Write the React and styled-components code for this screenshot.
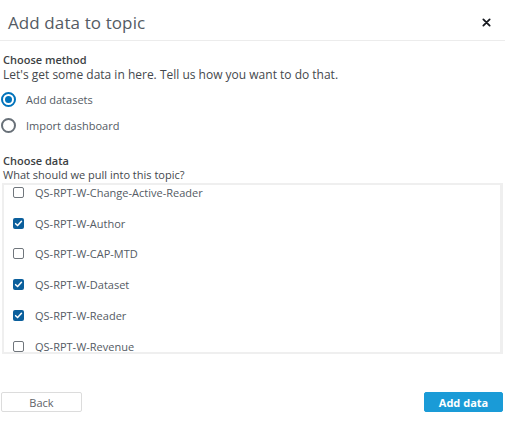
import React, { useEffect, useRef } from "react";
import styled, { createGlobalStyle } from "styled-components";

const Global = createGlobalStyle`
  html, body { margin: 0; padding: 0; background: #fff; }
  body { font-family: "Open Sans", "Noto Sans", Arial, sans-serif; }
  * { box-sizing: border-box; }
`;

const Dialog = styled.div`
  width: 511px;
  height: 431px;
  background: #fff;
  display: flex;
  flex-direction: column;
`;

const Header = styled.div`
  height: 41px;
  display: flex;
  align-items: center;
  justify-content: space-between;
  padding: 4px 13px 0 8px;
  margin-right: 6px;
  border-bottom: 1px solid #ececec;
`;

const Title = styled.h1`
  margin: 0;
  font-size: 17px;
  font-weight: 400;
  color: #545b64;
  letter-spacing: 0.1px;
`;

const Close = styled.button`
  border: 0;
  background: none;
  padding: 0;
  width: 12px;
  height: 12px;
  display: flex;
  align-items: center;
  justify-content: center;
  cursor: pointer;
`;

const Body = styled.div`
  padding: 12px 8px 0 3px;
  display: flex;
  flex-direction: column;
`;

const Section = styled.div`
  display: flex;
  flex-direction: column;
  margin-bottom: ${(p) => p.$gap || 0}px;
`;

const Label = styled.div`
  font-size: 11px;
  line-height: 14px;
  font-weight: 600;
  color: #3c3f43;
`;

const Description = styled.div`
  font-size: ${(p) => p.$size || 11}px;
  line-height: ${(p) => (p.$size ? 16 : 14)}px;
  color: #44484d;
`;

const RadioGroup = styled.div`
  display: flex;
  flex-direction: column;
  gap: 10px;
  padding-top: 8px;
`;

const RadioRow = styled.label`
  display: flex;
  align-items: center;
  gap: 10px;
  height: 16px;
  margin-left: -2px;
  font-size: 11px;
  color: #545b64;
`;

const RadioCircle = styled.span`
  width: 15px;
  height: 15px;
  border-radius: 50%;
  border: 2px solid ${(p) => (p.$checked ? "#0073bb" : "#687078")};
  display: flex;
  align-items: center;
  justify-content: center;
  &::after {
    content: "";
    width: 7px;
    height: 7px;
    border-radius: 50%;
    background: ${(p) => (p.$checked ? "#0073bb" : "transparent")};
  }
`;

const ListBox = styled.div`
  margin-top: 1px;
  height: 171px;
  margin-left: -1px;
  border: 2px solid #efefef;
  border-right-width: 3px;
  overflow: hidden;
`;

const List = styled.ul`
  list-style: none;
  margin: 0;
  padding: 0;
`;

const Item = styled.li`
  height: 30.8px;
  display: flex;
  align-items: center;
  gap: 11px;
  padding-left: 9px;
  font-size: 11px;
  color: #545b64;
`;

const Box = styled.span`
  width: 11px;
  height: 11px;
  border-radius: 2px;
  border: ${(p) => (p.$checked ? "none" : "1.5px solid #70767c")};
  background: ${(p) => (p.$checked ? "#0b5f9c" : "#fff")};
  display: flex;
  align-items: center;
  justify-content: center;
`;

const Footer = styled.div`
  margin-top: auto;
  height: 38px;
  display: flex;
  justify-content: space-between;
  align-items: flex-start;
  padding: 0 8px 0 1px;
  margin-bottom: 1px;
`;

const Button = styled.button`
  width: ${(p) => (p.$primary ? 79 : 81)}px;
  height: 20px;
  font-family: inherit;
  font-size: 11px;
  font-weight: ${(p) => (p.$primary ? 700 : 400)};
  color: ${(p) => (p.$primary ? "#fff" : "#5f6368")};
  background: ${(p) => (p.$primary ? "#1a9bd7" : "#fff")};
  border: 1px solid ${(p) => (p.$primary ? "#1a9bd7" : "#dcdcdc")};
  border-radius: 2px;
  padding: 0;
  cursor: pointer;
`;

const datasets = [
  { name: "QS-RPT-W-Change-Active-Reader", checked: false },
  { name: "QS-RPT-W-Author", checked: true },
  { name: "QS-RPT-W-CAP-MTD", checked: false },
  { name: "QS-RPT-W-Dataset", checked: true },
  { name: "QS-RPT-W-Reader", checked: true },
  { name: "QS-RPT-W-Revenue", checked: false },
];

const Check = () => (
  <svg width="9" height="9" viewBox="0 0 10 10">
    <path d="M1.8 5.2 L4 7.3 L8.3 2.6" fill="none" stroke="#fff" strokeWidth="1.7" strokeLinecap="round" strokeLinejoin="round" />
  </svg>
);

export default function App() {
  const listRef = useRef(null);
  useEffect(() => {
    if (listRef.current) listRef.current.scrollTop = 8;
  }, []);
  return (
    <>
      <Global />
      <Dialog>
        <Header>
          <Title>Add data to topic</Title>
          <Close aria-label="Close">
            <svg width="9" height="9" viewBox="0 0 10 10">
              <path d="M1.5 1.5 L8.5 8.5 M8.5 1.5 L1.5 8.5" stroke="#16191f" strokeWidth="2" strokeLinecap="round" />
            </svg>
          </Close>
        </Header>
        <Body>
          <Section $gap={21}>
            <Label>Choose method</Label>
            <Description $size={12}>Let's get some data in here. Tell us how you want to do that.</Description>
            <RadioGroup>
              <RadioRow>
                <RadioCircle $checked />
                Add datasets
              </RadioRow>
              <RadioRow>
                <RadioCircle />
                Import dashboard
              </RadioRow>
            </RadioGroup>
          </Section>
          <Section>
            <Label>Choose data</Label>
            <Description>What should we pull into this topic?</Description>
            <ListBox ref={listRef}>
              <List>
                {datasets.map((d) => (
                  <Item key={d.name}>
                    <Box $checked={d.checked}>{d.checked && <Check />}</Box>
                    {d.name}
                  </Item>
                ))}
              </List>
            </ListBox>
          </Section>
        </Body>
        <Footer>
          <Button>Back</Button>
          <Button $primary>Add data</Button>
        </Footer>
      </Dialog>
    </>
  );
}
